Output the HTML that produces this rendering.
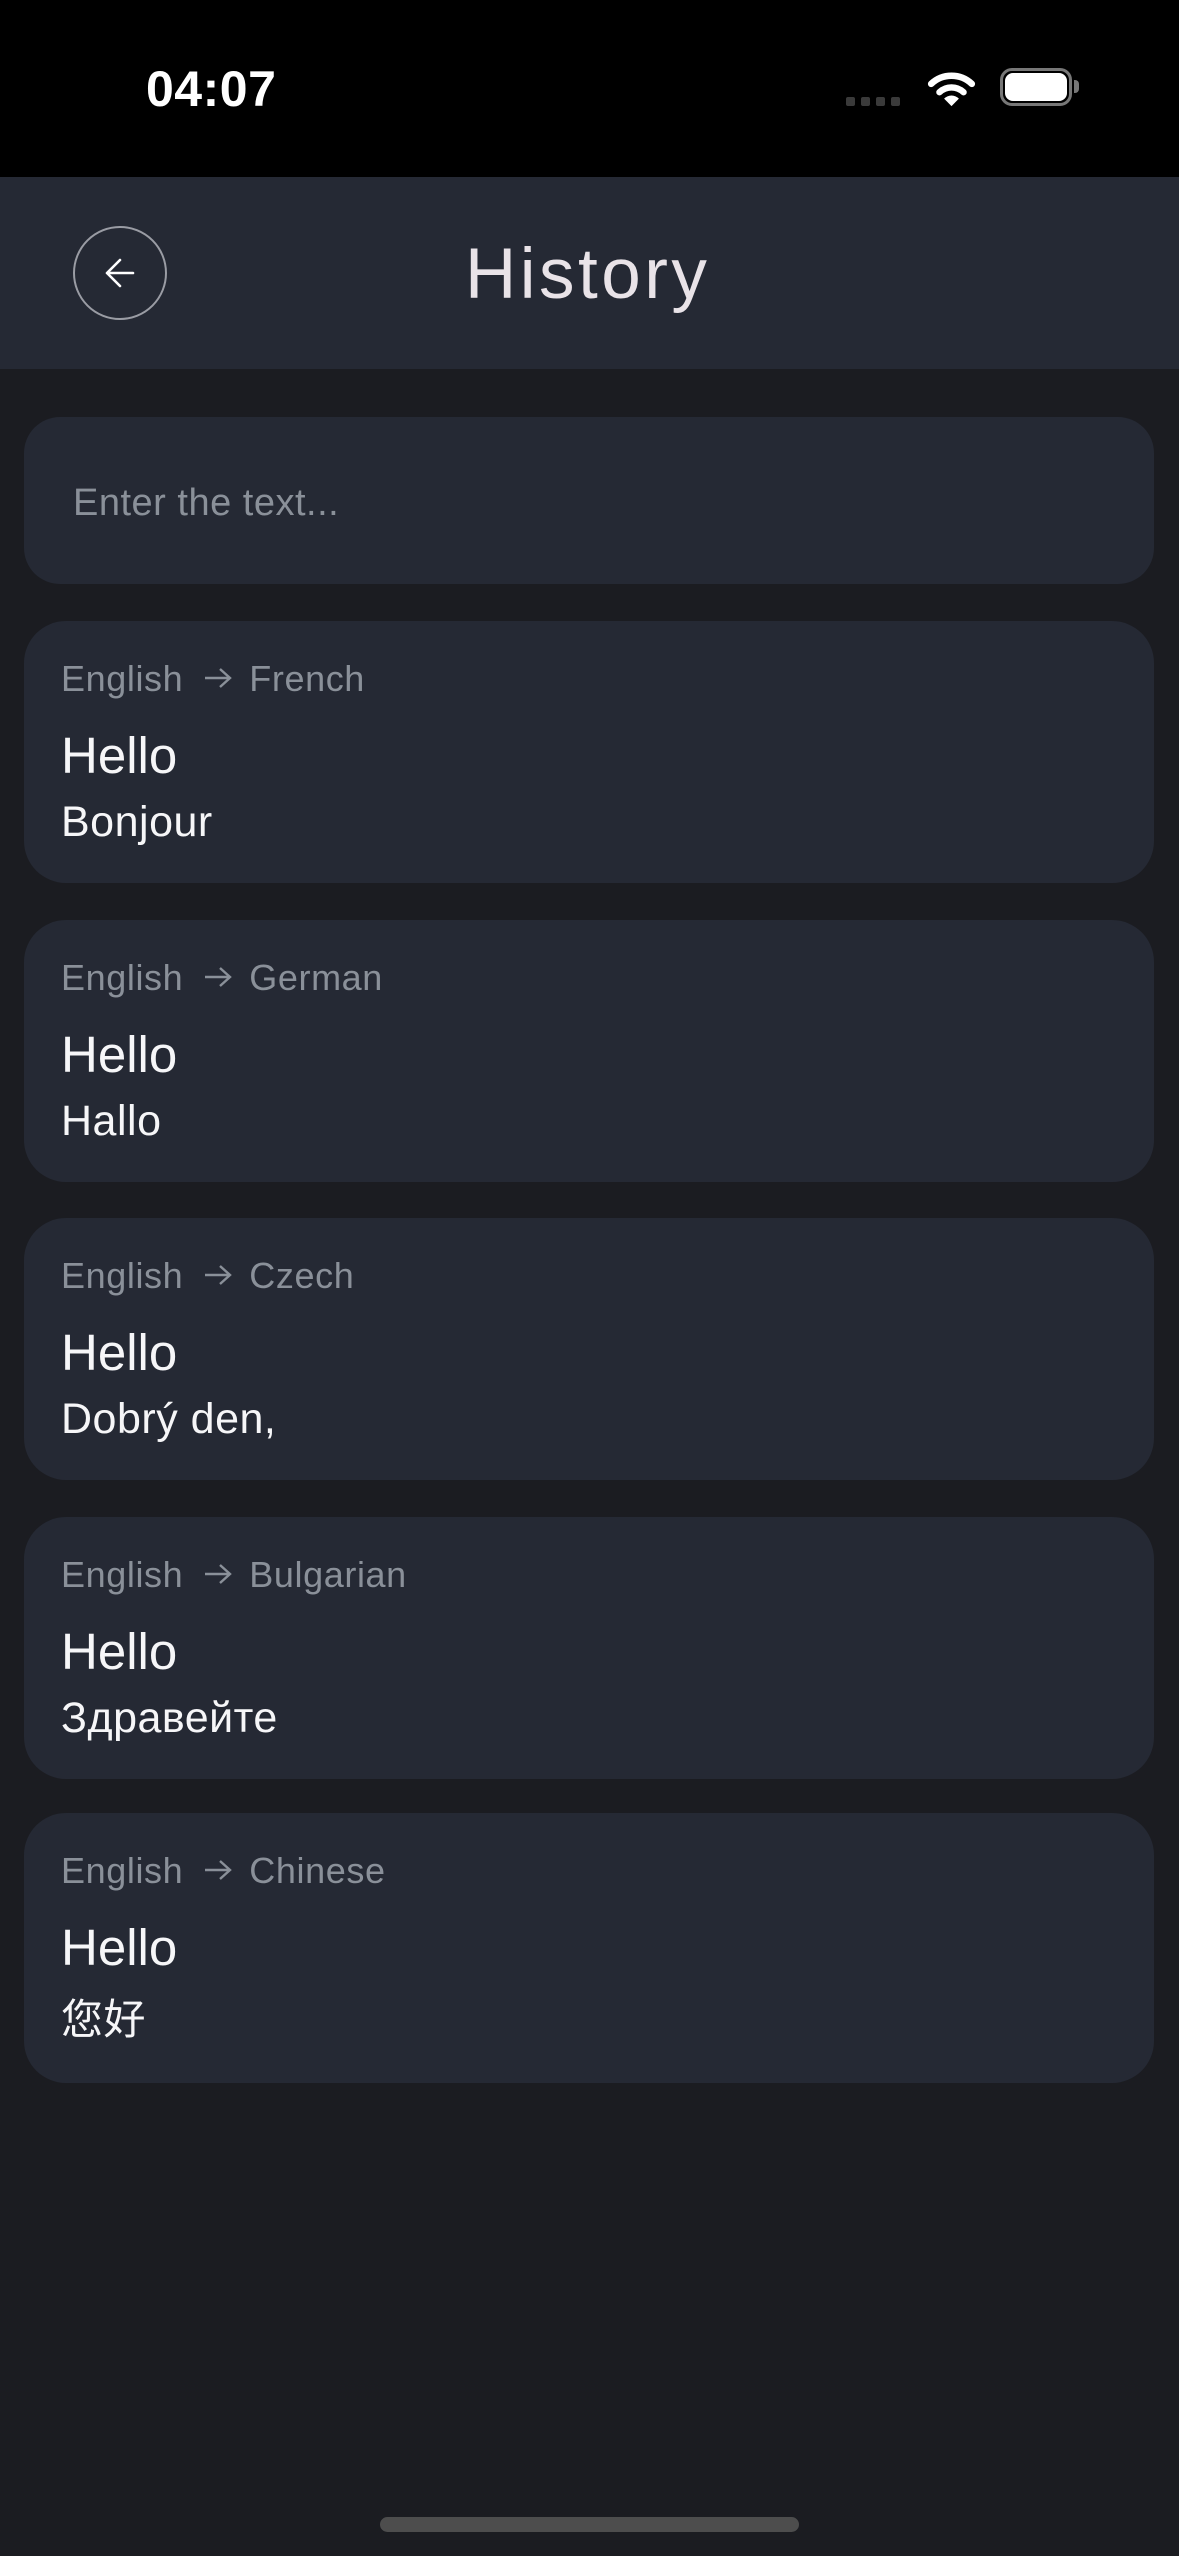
<!DOCTYPE html>
<html><head><meta charset="utf-8"><style>
*{margin:0;padding:0;box-sizing:border-box}
html,body{width:1179px;height:2556px;background:#1b1c21;overflow:hidden;font-family:"Liberation Sans","Noto Sans CJK SC",sans-serif}
.a{position:absolute;line-height:1;white-space:nowrap}
.card{position:absolute;left:24px;width:1130px;height:262px;background:#252934;border-radius:42px}
.lab{position:absolute;left:37px;font-size:36px;color:#8a9099;line-height:1;white-space:nowrap;letter-spacing:0.6px}
.lab svg{display:inline-block;vertical-align:middle;margin:-6px 16px 0 20px}
.h{position:absolute;left:37px;font-size:51px;color:#f6f6f8;line-height:1}
.t{position:absolute;left:37px;font-size:43px;color:#f6f6f8;line-height:1;letter-spacing:0.5px}
</style></head><body>
<div style="position:absolute;left:0;top:0;width:1179px;height:177px;background:#000"></div>
<div class="a" style="left:146px;top:64px;font-size:50px;font-weight:bold;color:#fff;letter-spacing:0.5px">04:07</div>
<div style="position:absolute;left:846px;top:97px;width:9px;height:9px;border-radius:2px;background:#3a3a3a"></div>
<div style="position:absolute;left:861px;top:97px;width:9px;height:9px;border-radius:2px;background:#3a3a3a"></div>
<div style="position:absolute;left:876px;top:97px;width:9px;height:9px;border-radius:2px;background:#3a3a3a"></div>
<div style="position:absolute;left:891px;top:97px;width:9px;height:9px;border-radius:2px;background:#3a3a3a"></div>
<svg style="position:absolute;left:927px;top:70px" width="49" height="37" viewBox="0 0 52 40">
<path d="M4 15 A32 32 0 0 1 48 15" stroke="#fff" stroke-width="7" fill="none" stroke-linecap="round"/>
<path d="M13 24 A19 19 0 0 1 39 24" stroke="#fff" stroke-width="7" fill="none" stroke-linecap="round"/>
<path d="M18 31 L26 39 L34 31 A11 11 0 0 0 18 31 Z" fill="#fff"/>
</svg>
<div style="position:absolute;left:1000px;top:68px;width:72px;height:38px;border:3px solid #777;border-radius:12px"></div>
<div style="position:absolute;left:1005px;top:73px;width:62px;height:28px;background:#fff;border-radius:8px"></div>
<div style="position:absolute;left:1074px;top:80px;width:5px;height:13px;background:#777;border-radius:0 4px 4px 0"></div>

<div style="position:absolute;left:0;top:177px;width:1179px;height:192px;background:#252934"></div>
<div style="position:absolute;left:73px;top:226px;width:94px;height:94px;border:2px solid #9a9ca4;border-radius:50%"></div>
<svg style="position:absolute;left:96px;top:249px" width="48" height="48" viewBox="0 0 48 48"><path d="M37 24 H11 M24 11 L11 24 L24 37" stroke="#fff" stroke-width="2.6" fill="none" stroke-linecap="round" stroke-linejoin="round"/></svg>
<div class="a" style="left:465px;top:239px;font-size:71px;color:#e9e3e8;letter-spacing:3.5px">History</div>

<div style="position:absolute;left:24px;top:417px;width:1130px;height:167px;background:#252934;border-radius:36px"></div>
<div class="a" style="left:73px;top:484px;font-size:38px;color:#8a9099;letter-spacing:0.5px">Enter the text...</div>

<div class="card" style="top:621px"><div class="lab" style="top:40px">English<svg width="30" height="24" viewBox="0 0 30 24"><path d="M2 12 H27 M17 3 L27 12 L17 21" stroke="#8a9099" stroke-width="2.4" fill="none"/></svg>French</div><div class="h" style="top:109px">Hello</div><div class="t" style="top:180px">Bonjour</div></div>
<div class="card" style="top:920px"><div class="lab" style="top:40px">English<svg width="30" height="24" viewBox="0 0 30 24"><path d="M2 12 H27 M17 3 L27 12 L17 21" stroke="#8a9099" stroke-width="2.4" fill="none"/></svg>German</div><div class="h" style="top:109px">Hello</div><div class="t" style="top:180px">Hallo</div></div>
<div class="card" style="top:1218px"><div class="lab" style="top:40px">English<svg width="30" height="24" viewBox="0 0 30 24"><path d="M2 12 H27 M17 3 L27 12 L17 21" stroke="#8a9099" stroke-width="2.4" fill="none"/></svg>Czech</div><div class="h" style="top:109px">Hello</div><div class="t" style="top:180px">Dobrý den,</div></div>
<div class="card" style="top:1517px"><div class="lab" style="top:40px">English<svg width="30" height="24" viewBox="0 0 30 24"><path d="M2 12 H27 M17 3 L27 12 L17 21" stroke="#8a9099" stroke-width="2.4" fill="none"/></svg>Bulgarian</div><div class="h" style="top:109px">Hello</div><div class="t" style="top:180px">Здравейте</div></div>
<div class="card" style="top:1813px;height:270px"><div class="lab" style="top:40px">English<svg width="30" height="24" viewBox="0 0 30 24"><path d="M2 12 H27 M17 3 L27 12 L17 21" stroke="#8a9099" stroke-width="2.4" fill="none"/></svg>Chinese</div><div class="h" style="top:109px">Hello</div><div class="t" style="top:183px;font-family:'Noto Sans CJK SC',sans-serif;font-size:42px">您好</div></div>

<div style="position:absolute;left:380px;top:2517px;width:419px;height:15px;background:#4d4d4d;border-radius:8px"></div>
</body></html>
